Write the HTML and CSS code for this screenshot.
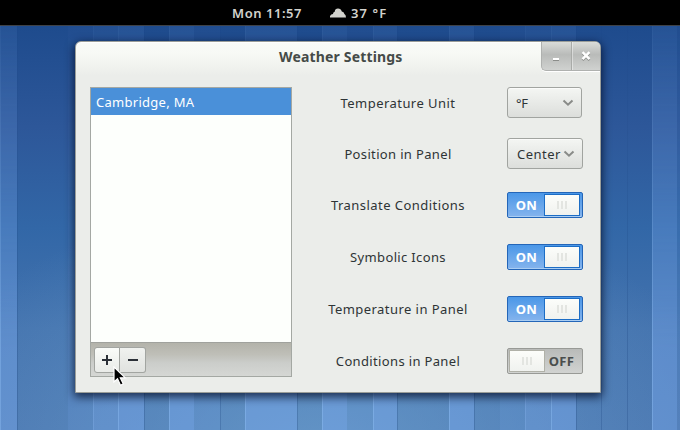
FILE: index.html
```html
<!DOCTYPE html>
<html lang="en">
<head>
<meta charset="utf-8">
<title>Weather Settings</title>
<link rel="stylesheet" href="styles.css">
</head>
<body>
<div class="desktop">
  <header class="panel">
    <span class="clock">Mon 11:57</span>
    <svg class="cloud" width="16" height="10" viewBox="0 0 16 10"><path d="M0 9.5V8L1.3 6.6L3 6Q3 4 4.7 3.7Q5 .6 8 .6Q11 .6 11.8 3.5Q14 3.7 14.4 6Q16 6.8 16 9.5Z" fill="#d2d2cd"/></svg>
    <span class="temp">37 °F</span>
  </header>
  <main class="wallpaper">
    <div class="stripes" aria-hidden="true">
      <i class="w17 l3"></i><i class="w51 l0"></i><i class="w25 l1"></i><i class="w25 l2"></i><i class="w26 l3"></i><i class="w25 l0"></i><i class="w25 l3"></i><i class="w26 l1"></i><i class="w25 l0"></i><i class="w52 l3"></i><i class="w25 l0"></i><i class="w25 l3"></i><i class="w26 l1"></i><i class="w24 l3"></i><i class="w52 l0"></i><i class="w25 l3"></i><i class="w26 l0"></i><i class="w25 l1"></i><i class="w26 l2"></i><i class="w25 l3"></i><i class="w25 l0"></i><i class="w26 l0"></i><i class="w25 l0"></i><i class="w25 l3"></i><i class="w3 l1"></i>
    </div>
    <section class="window">
      <div class="titlebar">
        <h1>Weather Settings</h1>
        <div class="controls">
          <button aria-label="Minimize"><svg width="12" height="12" viewBox="0 0 12 12"><path d="M3 10h6" stroke="#8b8d8a" stroke-width="2"/><path d="M3 9h6" stroke="#fff" stroke-width="2"/></svg></button>
          <button aria-label="Close"><svg width="12" height="12" viewBox="0 0 12 12"><path d="M2.5 3.2l7 7m0-7l-7 7" stroke="#8b8d8a" stroke-width="2.4"/><path d="M2.5 2.2l7 7m0-7l-7 7" stroke="#fff" stroke-width="2.4"/></svg></button>
        </div>
      </div>
      <div class="content">
        <div class="locations">
          <div class="list"><div class="selected"><span>Cambridge, MA</span></div></div>
          <div class="toolbar">
            <button aria-label="Add"><svg width="10" height="10" viewBox="0 0 10 10"><path d="M0 5h10M5 0v10" stroke="#2b3037" stroke-width="2"/></svg></button>
            <button aria-label="Remove"><svg width="10" height="10" viewBox="0 0 10 10"><path d="M0 5h10" stroke="#2b3037" stroke-width="2"/></svg></button>
            <svg class="pointer" width="14" height="21" viewBox="0 0 14 21"><path d="M1 1v15l3.5-3.2 3 6.4 2.8-1.3-3-6.1h5z" fill="#000" stroke="#fff" stroke-width="1.2"/></svg>
          </div>
        </div>
        <div class="settings">
          <div class="row"><label class="wide">Temperature Unit</label><button class="combo short"><span>°F</span><svg width="12" height="8" viewBox="0 0 12 8"><path d="M1.5 1.5L6 5.7l4.5-4.2" fill="none" stroke="#898b88" stroke-width="2"/></svg></button></div>
          <div class="row"><label>Position in Panel</label><button class="combo"><span>Center</span><svg width="12" height="8" viewBox="0 0 12 8"><path d="M1.5 1.5L6 5.7l4.5-4.2" fill="none" stroke="#898b88" stroke-width="2"/></svg></button></div>
          <div class="row"><label class="wide">Translate Conditions</label><div class="switch"><b>ON</b><div class="knob"><i></i><i></i><i></i></div></div></div>
          <div class="row"><label>Symbolic Icons</label><div class="switch"><b>ON</b><div class="knob"><i></i><i></i><i></i></div></div></div>
          <div class="row"><label class="wide">Temperature in Panel</label><div class="switch"><b>ON</b><div class="knob"><i></i><i></i><i></i></div></div></div>
          <div class="row"><label>Conditions in Panel</label><div class="switch off"><div class="knob"><i></i><i></i><i></i></div><b>OFF</b></div></div>
        </div>
      </div>
    </section>
  </main>
</div>
</body>
</html>
```
FILE: styles.css
```css
* { box-sizing: border-box; }
body { margin: 0; font: 13px/20px "Noto Sans", sans-serif; color: #2e3436; }
button { font: inherit; color: inherit; padding: 0; margin: 0; border: 0; background: none; }
svg { display: block; flex: none; }
.desktop { width: 680px; height: 430px; overflow: hidden; display: flex; flex-direction: column; background: #000; }
.panel { height: 26px; flex: none; display: flex; align-items: center; padding-left: 232px; background: #000; border-bottom: 1px solid #3e4248; color: #d2d2cd; font-weight: 600; white-space: nowrap; }
.clock { width: 98px; letter-spacing: .55px; }
.cloud { margin-right: 5px; }
.temp { letter-spacing: 1.1px; }
.wallpaper { flex: 1; display: grid; padding-top: 15px; background: radial-gradient(ellipse 430px 260px at 320px 430px, rgba(110,162,208,.7), transparent), linear-gradient(#1e4b8d 0, #2d5799 25%, #3267a7 50%, #4473ae 75%, #4a76b0 100%); }
.stripes { grid-area: 1/1; display: flex; height: 404px; margin-top: -15px; -webkit-mask-image: linear-gradient(rgba(0,0,0,.2), #000 80%); mask-image: linear-gradient(rgba(0,0,0,.2), #000 80%); }
.stripes i { flex: none; }
.w3 { width: 3px; }
.w17 { width: 17px; }
.w24 { width: 24px; }
.w25 { width: 25px; }
.w26 { width: 26px; }
.w51 { width: 51px; }
.w52 { width: 52px; }
.l0 { border-left: 1px solid rgba(25,65,125,.25); }
.l1 { background: rgba(120,170,240,.14); }
.l2 { background: rgba(130,175,245,.28); border-left: 1px solid rgba(160,200,255,.2); }
.l3 { background: rgba(125,172,240,.42); border-left: 1px solid rgba(160,205,255,.3); }
.window { grid-area: 1/1; width: 526px; height: 352px; margin-left: 75px; border: 1px solid #9b9e99; border-radius: 6px 6px 0 0; background: linear-gradient(#f9fbf8 0, #f7f9f5 12px, #ebedea 34px); box-shadow: inset 0 1px #fff, 0 3px 10px 1px rgba(0,10,35,.75); position: relative; }
.titlebar { height: 45px; display: grid; grid-template-columns: 1fr; }
.titlebar h1 { grid-area: 1/1; margin: 5px 0 0 203px; font-size: 14px; line-height: 20px; font-weight: 700; color: #454b48; white-space: nowrap; letter-spacing: .17px; }
.controls { grid-area: 1/1; justify-self: end; display: flex; width: 59px; height: 29px; border: 1px solid #afb1af; border-width: 0 0 1px 1px; border-radius: 0 5px 0 5px; background: linear-gradient(#dadcd9, #b9bbb9 45%, #d0d2d0); box-shadow: 0 1px #fff; }
.controls button { flex: 1; display: grid; place-items: center; }
.controls button + button { border-left: 1px solid #a9aba8; box-shadow: inset 1px 0 rgba(255,255,255,.4); }
.content { display: flex; margin-left: 14px; }
.locations { width: 202px; height: 290px; border: 1px solid #a4a8a3; display: flex; flex-direction: column; }
.list { height: 254px; background: #fdfffc; }
.selected { height: 27px; padding: 4px 5px; color: #fff; background: #4a90d9; white-space: nowrap; letter-spacing: .28px; }
.toolbar { height: 34px; display: flex; position: relative; padding: 4px 3px; border-top: 1px solid #a0a29d; background: linear-gradient(#b3b3aa, #bfbfb8 35%, #cbcdca 60%, #d5d7d4); }
.toolbar button { width: 26px; height: 26px; display: grid; place-items: center; border: 1px solid #a2a5a1; border-radius: 3px 0 0 3px; background: linear-gradient(#fafcf9, #e9ebe8); }
.toolbar button + button { border-left: 0; border-radius: 0 3px 3px 0; background: linear-gradient(#f0f2ef, #e0e2df); }
.pointer { position: absolute; left: 22px; top: 23px; }
.settings { flex: 1; display: flex; flex-direction: column; }
.row { display: grid; grid-template-columns: 215px 76px; align-items: center; height: 31px; margin-bottom: 20px; flex: none; }
.row:nth-child(2) { margin-bottom: 23px; }
.row:nth-child(n+3) { height: 26px; margin-bottom: 26px; }
.row label { justify-self: center; margin-right: 3px; white-space: nowrap; letter-spacing: .35px; }
.row .wide { letter-spacing: .45px; }
.combo { width: 76px; height: 31px; display: flex; align-items: center; justify-content: space-between; padding: 0 7px 0 9px; border: 1px solid #a1a4a0; border-radius: 3px; background: linear-gradient(#f4f6f3, #dcdedb); box-shadow: inset 0 1px rgba(255,255,255,.6); }
.combo span { letter-spacing: .5px; }
.combo.short { width: 75px; padding-left: 8px; }
.combo.short span { letter-spacing: -.4px; }
.switch { width: 76px; height: 26px; display: flex; padding: 1px; border: 1px solid #2466b8; border-radius: 2px; background: linear-gradient(#4a97e8, #85b4ed); box-shadow: inset 0 -1px #a9cdf3; }
.switch b { flex: 1; display: grid; place-items: center; font-size: 13px; line-height: 22px; font-weight: 700; color: #fff; letter-spacing: .3px; }
.knob { width: 36px; height: 22px; margin-right: 1px; display: flex; align-items: center; justify-content: center; gap: 2px; border: 1px solid #1c6dc5; background: linear-gradient(#fcfdfa, #f0f2ef); }
.knob i { width: 2px; height: 8px; background: #e3e5e1; }
.switch.off { border-color: #989a96; background: linear-gradient(#b9bbb9, #d1d3d1); box-shadow: none; }
.off b { padding-right: 3px; color: #4a4e4d; }
.off .knob { margin-right: 0; border-color: #b0b1a8; }
```
